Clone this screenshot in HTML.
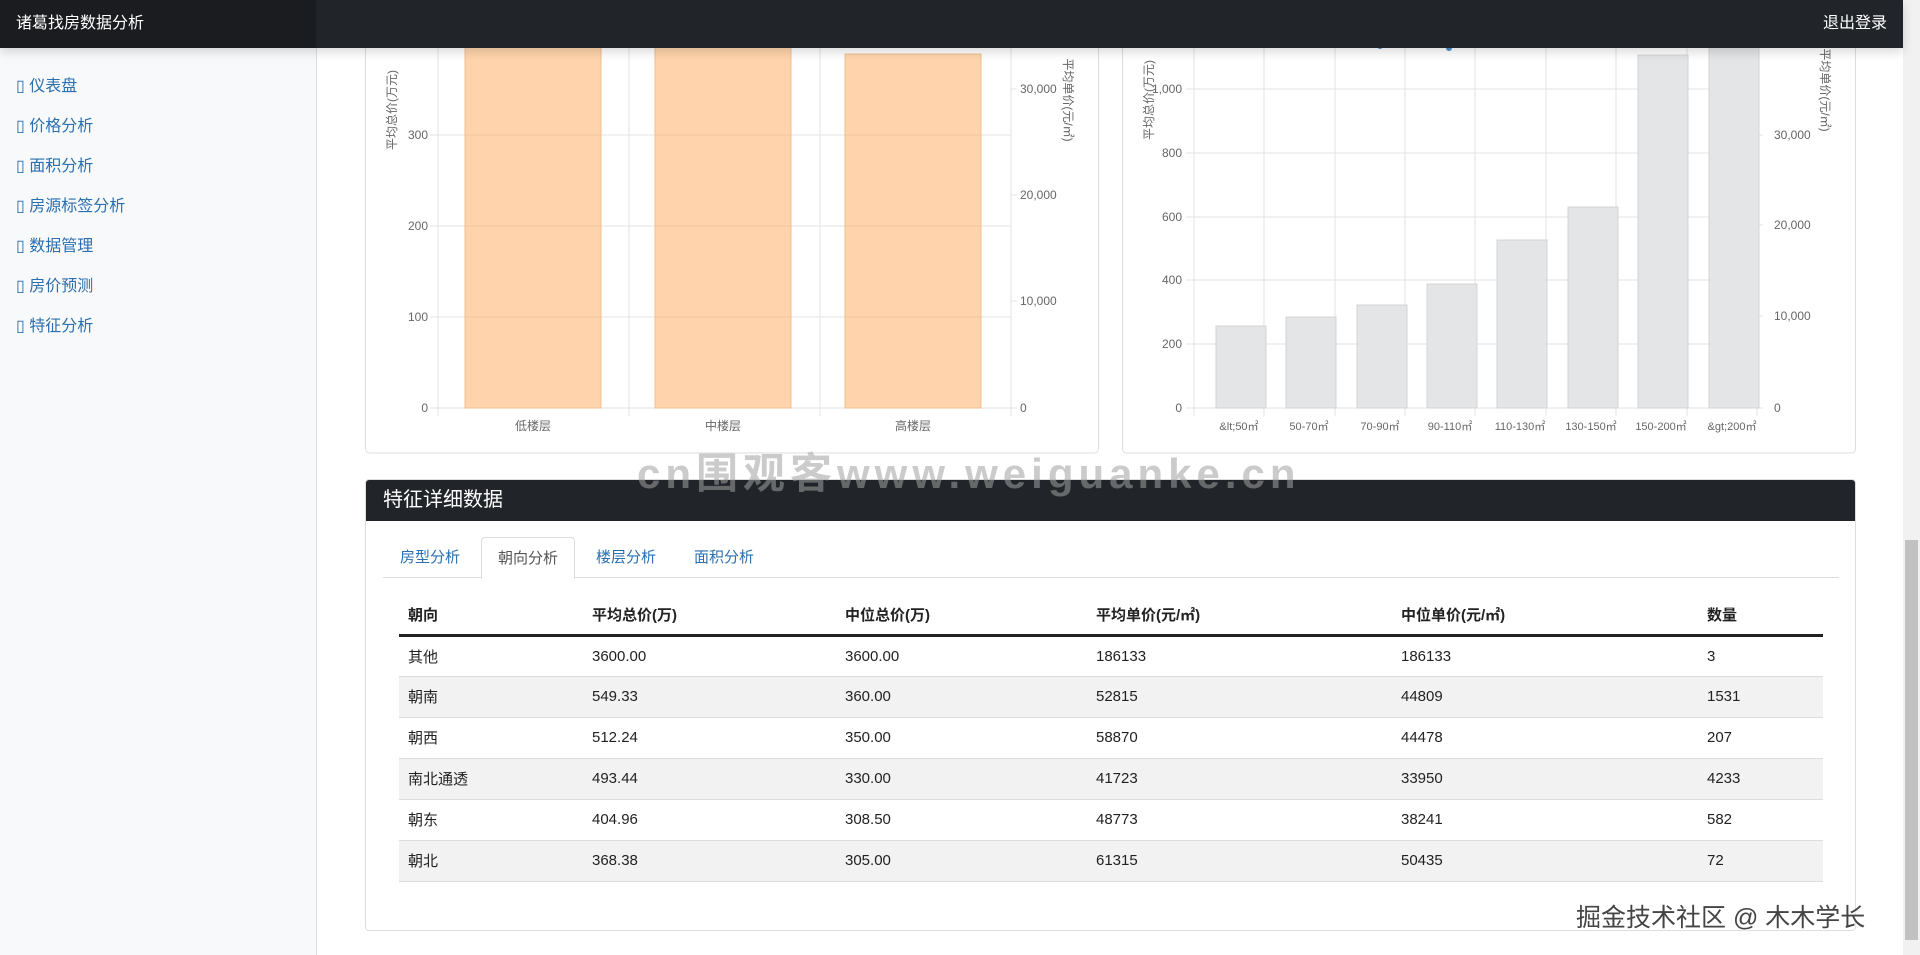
<!DOCTYPE html>
<html><head><meta charset="utf-8"><style>
*{box-sizing:border-box;margin:0;padding:0}
body{width:1920px;height:955px;overflow:hidden;background:#fff;font-family:"Liberation Sans","Noto Sans CJK SC",sans-serif;position:relative}
.nav{position:absolute;left:0;top:0;width:1903px;height:48px;background:#212529;z-index:5;box-shadow:0 4px 10px rgba(0,0,0,.15)}
.nav .brand{position:absolute;left:0;top:0;width:316px;height:48px;background:#1a1c1f;color:#fff;font-size:16px;line-height:48px;padding-left:16px}
.nav .out{position:absolute;right:16px;top:0;line-height:48px;color:#fff;font-size:16px}
.side{position:absolute;left:0;top:48px;width:317px;height:907px;background:#f8f9fa;border-right:1px solid #ddd}
.side div{position:absolute;left:16px;color:#2a6fb0;font-size:16px}
.sb{position:absolute;right:0;top:0;width:17px;height:955px;background:#f1f1f1}
.sb .th{position:absolute;left:2px;top:540px;width:13px;height:400px;background:#c1c1c1}
.card{position:absolute;border:1px solid #ddd;border-radius:4px;background:#fff}
.hd{background:#212529;color:#fff;font-size:20px;height:41px;line-height:41px;padding-left:17px;border-radius:3px 3px 0 0}
.tabs{position:absolute;left:17px;top:57px;width:1456px;height:41px;border-bottom:1px solid #ddd}
.tabs span{position:absolute;top:0;height:41px;line-height:41px;font-size:15px;color:#2a6fb0}
.tabs .act{border:1px solid #ddd;border-bottom:1px solid #fff;border-radius:4px 4px 0 0;color:#555;background:#fff;padding:0 16px;height:42px}
table{position:absolute;left:33px;top:116px;width:1424px;border-collapse:collapse;font-size:15px;color:#222}
th{text-align:left;height:39px;border-bottom:3px solid #222;font-weight:bold;padding-left:9px}
td{height:41px;border-bottom:1px solid #ddd;padding-left:9px}
tr:nth-child(odd) td{background:#f2f2f2}
.wm{position:absolute;left:637px;top:440px;font-size:42px;font-weight:bold;color:rgba(160,160,160,.55);z-index:3;letter-spacing:5px}
.jj{position:absolute;left:1576px;top:898px;font-size:25px;color:#444;text-shadow:1px 1px 0 #fff;z-index:3}
</style></head><body>
<svg style="position:absolute;left:0;top:0" width="1903" height="955" font-family="Liberation Sans, Noto Sans CJK SC, sans-serif" font-size="12" fill="#666">
<rect x="365.5" y="20" width="733" height="433" rx="4" fill="#fff" stroke="#ddd"/>
<rect x="1122.5" y="20" width="733" height="433" rx="4" fill="#fff" stroke="#ddd"/>
<g stroke="#e3e3e3">
<line x1="430" y1="408" x2="1011" y2="408"/><line x1="430" y1="317" x2="1011" y2="317"/><line x1="430" y1="226" x2="1011" y2="226"/><line x1="430" y1="135" x2="1011" y2="135"/>
<line x1="438" y1="40" x2="438" y2="416"/><line x1="629" y1="40" x2="629" y2="416"/><line x1="820" y1="40" x2="820" y2="416"/><line x1="1011" y1="40" x2="1011" y2="416"/>
<line x1="1011" y1="89" x2="1017" y2="89"/><line x1="1011" y1="195" x2="1017" y2="195"/><line x1="1011" y1="301" x2="1017" y2="301"/><line x1="1011" y1="408" x2="1017" y2="408"/>
</g>
<g fill="rgba(255,170,90,.5)" stroke="#f0c090">
<rect x="465" y="40" width="136" height="368"/><rect x="655" y="40" width="136" height="368"/><rect x="845" y="54" width="136" height="354"/></g>
<g text-anchor="end"><text x="428" y="412">0</text><text x="428" y="321">100</text><text x="428" y="230">200</text><text x="428" y="139">300</text></g>
<text x="1020" y="412">0</text><text x="1020" y="305">10,000</text><text x="1020" y="199">20,000</text><text x="1020" y="93">30,000</text>
<g text-anchor="middle"><text x="533" y="430">低楼层</text><text x="723" y="430">中楼层</text><text x="913" y="430">高楼层</text></g>
<text transform="translate(396,110) rotate(-90)" text-anchor="middle">平均总价(万元)</text>
<text transform="translate(1064,100) rotate(90)" text-anchor="middle">平均单价(元/㎡)</text>
<g stroke="#e3e3e3">
<line x1="1186" y1="408" x2="1757" y2="408"/><line x1="1186" y1="344" x2="1757" y2="344"/><line x1="1186" y1="280" x2="1757" y2="280"/><line x1="1186" y1="217" x2="1757" y2="217"/><line x1="1186" y1="153" x2="1757" y2="153"/><line x1="1186" y1="89" x2="1757" y2="89"/>
<line x1="1194" y1="40" x2="1194" y2="416"/><line x1="1264" y1="40" x2="1264" y2="416"/><line x1="1335" y1="40" x2="1335" y2="416"/><line x1="1405" y1="40" x2="1405" y2="416"/><line x1="1475" y1="40" x2="1475" y2="416"/><line x1="1546" y1="40" x2="1546" y2="416"/><line x1="1616" y1="40" x2="1616" y2="416"/><line x1="1687" y1="40" x2="1687" y2="416"/><line x1="1757" y1="40" x2="1757" y2="416"/>
<line x1="1757" y1="135" x2="1763" y2="135"/><line x1="1757" y1="225" x2="1763" y2="225"/><line x1="1757" y1="316" x2="1763" y2="316"/><line x1="1757" y1="408" x2="1763" y2="408"/>
</g>
<g fill="#e4e5e6" stroke="#d4d4d4">
<rect x="1216" y="326" width="50" height="82"/><rect x="1286" y="317" width="50" height="91"/><rect x="1357" y="305" width="50" height="103"/><rect x="1427" y="284" width="50" height="124"/><rect x="1497" y="240" width="50" height="168"/><rect x="1568" y="207" width="50" height="201"/><rect x="1638" y="55" width="50" height="353"/><rect x="1709" y="40" width="50" height="368"/></g>
<g fill="#4a90d0"><circle cx="1380" cy="46" r="3"/><circle cx="1449" cy="48" r="3"/></g>
<g text-anchor="end"><text x="1182" y="412">0</text><text x="1182" y="348">200</text><text x="1182" y="284">400</text><text x="1182" y="221">600</text><text x="1182" y="157">800</text><text x="1182" y="93">1,000</text></g>
<text x="1774" y="412">0</text><text x="1774" y="320">10,000</text><text x="1774" y="229">20,000</text><text x="1774" y="139">30,000</text>
<g text-anchor="middle" font-size="11"><text x="1239" y="430">&amp;lt;50㎡</text><text x="1309" y="430">50-70㎡</text><text x="1380" y="430">70-90㎡</text><text x="1450" y="430">90-110㎡</text><text x="1520" y="430">110-130㎡</text><text x="1591" y="430">130-150㎡</text><text x="1661" y="430">150-200㎡</text><text x="1732" y="430">&amp;gt;200㎡</text></g>
<text transform="translate(1153,100) rotate(-90)" text-anchor="middle">平均总价(万元)</text>
<text transform="translate(1821,90) rotate(90)" text-anchor="middle">平均单价(元/㎡)</text>
</svg>
<div class="nav"><div class="brand">诸葛找房数据分析</div><div class="out">退出登录</div></div>
<div class="side">
<div style="top:24px">▯ 仪表盘</div><div style="top:64px">▯ 价格分析</div><div style="top:104px">▯ 面积分析</div><div style="top:144px">▯ 房源标签分析</div><div style="top:184px">▯ 数据管理</div><div style="top:224px">▯ 房价预测</div><div style="top:264px">▯ 特征分析</div>
</div>
<div class="wm">cn围观客www.weiguanke.cn</div>
<div class="card" style="left:365px;top:479px;width:1491px;height:452px">
<div class="hd">特征详细数据</div>
<div class="tabs"><span style="left:17px">房型分析</span><span class="act" style="left:98px">朝向分析</span><span style="left:213px">楼层分析</span><span style="left:311px">面积分析</span></div>
<table>
<colgroup><col style="width:184px"><col style="width:253px"><col style="width:251px"><col style="width:305px"><col style="width:306px"><col></colgroup>
<tr><th>朝向</th><th>平均总价(万)</th><th>中位总价(万)</th><th>平均单价(元/㎡)</th><th>中位单价(元/㎡)</th><th>数量</th></tr>
<tr><td>其他</td><td>3600.00</td><td>3600.00</td><td>186133</td><td>186133</td><td>3</td></tr>
<tr><td>朝南</td><td>549.33</td><td>360.00</td><td>52815</td><td>44809</td><td>1531</td></tr>
<tr><td>朝西</td><td>512.24</td><td>350.00</td><td>58870</td><td>44478</td><td>207</td></tr>
<tr><td>南北通透</td><td>493.44</td><td>330.00</td><td>41723</td><td>33950</td><td>4233</td></tr>
<tr><td>朝东</td><td>404.96</td><td>308.50</td><td>48773</td><td>38241</td><td>582</td></tr>
<tr><td>朝北</td><td>368.38</td><td>305.00</td><td>61315</td><td>50435</td><td>72</td></tr>
</table>
</div>
<div class="jj">掘金技术社区 @ 木木学长</div>
<div class="sb"><div class="th"></div></div>
</body></html>
